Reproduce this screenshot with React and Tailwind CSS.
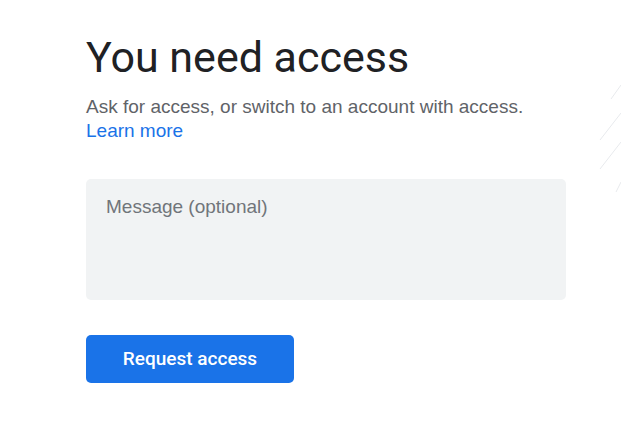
import React from 'react';

// Faint decorative strokes on the right edge
function EdgeLines() {
  return (
    <svg className="absolute right-0 top-0" width="30" height="220" viewBox="0 0 30 220">
      <g stroke="#e8eaed" strokeWidth="1">
        <line x1="30" y1="85" x2="20" y2="99" />
        <line x1="30" y1="113" x2="9" y2="140" />
        <line x1="30" y1="142" x2="9" y2="169" />
        <line x1="30" y1="182" x2="25" y2="192" />
      </g>
    </svg>
  );
}

export default function App() {
  return (
    <div className="relative h-[439px] w-[621px] overflow-hidden bg-white">
      <EdgeLines />
      <div className="pl-[86px] pt-[29px] w-[566px]">
        <h1 className="text-[43px] leading-[56px] text-[#202124] font-['Roboto','Open_Sans',sans-serif]">
          You need access
        </h1>
        <p className="mt-[10px] text-[19px] leading-[24px] text-[#5f6368] font-['Liberation_Sans',Arial,sans-serif]">
          Ask for access, or switch to an account with access.
          <br />
          <a href="#" className="text-[#1a73e8]">Learn more</a>
        </p>
        <textarea
          placeholder="Message (optional)"
          className="mt-[36px] block h-[121px] w-[480px] resize-none rounded-[5px] bg-[#f1f3f4] px-[20px] pt-[16px] text-[19px] leading-[24px] text-[#202124] placeholder:text-[#70757a] outline-none font-['Liberation_Sans',Arial,sans-serif]"
        />
        <button className="mt-[35px] h-[48px] w-[208px] rounded-[5px] bg-[#1a73e8] text-[19px] font-medium text-white font-['Roboto',sans-serif]">
          Request access
        </button>
      </div>
    </div>
  );
}
